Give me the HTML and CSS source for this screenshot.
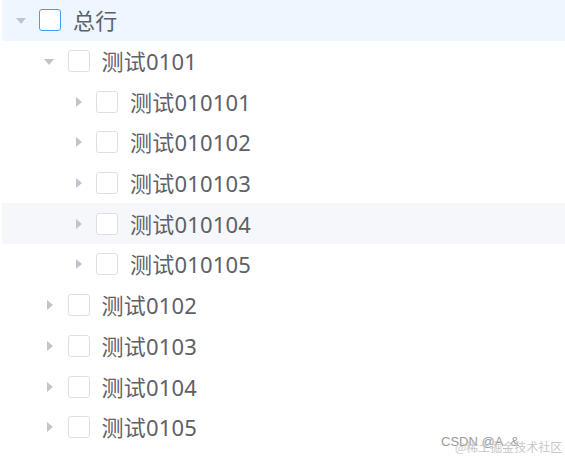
FILE: index.html
```html
<!DOCTYPE html>
<html lang="zh">
<head>
<meta charset="utf-8">
<link rel="stylesheet" href="styles.css">
</head>
<body>
<div class="tree">
  <div class="node current lv0"><span class="arrow down"></span><span class="cb active"></span><span class="label">总行</span></div>
  <div class="node lv1"><span class="arrow down"></span><span class="cb"></span><span class="label">测试0101</span></div>
  <div class="node lv2"><span class="arrow right"></span><span class="cb"></span><span class="label">测试010101</span></div>
  <div class="node lv2"><span class="arrow right"></span><span class="cb"></span><span class="label">测试010102</span></div>
  <div class="node lv2"><span class="arrow right"></span><span class="cb"></span><span class="label">测试010103</span></div>
  <div class="node hover lv2"><span class="arrow right"></span><span class="cb"></span><span class="label">测试010104</span></div>
  <div class="node lv2"><span class="arrow right"></span><span class="cb"></span><span class="label">测试010105</span></div>
  <div class="node lv1"><span class="arrow right"></span><span class="cb"></span><span class="label">测试0102</span></div>
  <div class="node lv1"><span class="arrow right"></span><span class="cb"></span><span class="label">测试0103</span></div>
  <div class="node lv1"><span class="arrow right"></span><span class="cb"></span><span class="label">测试0104</span></div>
  <div class="node lv1"><span class="arrow right"></span><span class="cb"></span><span class="label">测试0105</span></div>
</div>
<div class="watermark"><span class="wm1">CSDN @A_&amp;</span><span class="wm2">@稀土掘金技术社区</span></div>
</body>
</html>
```
FILE: styles.css
```css
html, body {
  margin: 0;
  padding: 0;
  background: #ffffff;
}
body {
  width: 565px;
  height: 460px;
  overflow: hidden;
  position: relative;
  font-family: "Noto Sans", "Noto Sans CJK SC", sans-serif;
}
.tree {
  padding-left: 2px;
  margin-top: 0;
}
.node {
  height: 40.7px;
  display: flex;
  align-items: center;
  color: #5e6066;
  font-size: 22px;
}
.node.current { background: #eef6ff; }
.node.hover { background: #f5f7fa; }
.lv0 { padding-left: 0; }
.lv1 { padding-left: 28.5px; }
.lv2 { padding-left: 57px; }
.arrow {
  width: 37px;
  height: 22px;
  display: flex;
  align-items: center;
  justify-content: center;
  flex: none;
}
.arrow::before {
  content: "";
  width: 0;
  height: 0;
}
.arrow.down::before {
  border-left: 5.5px solid transparent;
  border-right: 5.5px solid transparent;
  border-top: 6px solid #c0c4cc;
  margin-top: 1px;
}
.arrow.right::before {
  border-top: 5.5px solid transparent;
  border-bottom: 5.5px solid transparent;
  border-left: 6px solid #c0c4cc;
  margin-left: 2px;
}
.cb {
  width: 22px;
  height: 22px;
  box-sizing: border-box;
  border: 1.5px solid #dcdfe6;
  border-radius: 3px;
  background: #ffffff;
  flex: none;
}
.cb.active { border-color: #409eff; }
.label {
  margin-left: 12px;
  letter-spacing: 0.2px;
  line-height: 1;
  margin-top: 0;
}
.watermark {
  position: absolute;
  left: 441px;
  top: 434px;
  width: 124px;
  height: 22px;
}
.wm1 {
  position: absolute;
  left: 0;
  top: 0;
  font-size: 13px;
  color: #9a9a9a;
  font-family: "Liberation Sans", "Noto Sans CJK SC", sans-serif;
}
.wm2 {
  position: absolute;
  left: 14px;
  top: 4px;
  font-size: 12px;
  color: #c8c8c8;
  font-family: "Noto Sans CJK SC", sans-serif;
}
```
